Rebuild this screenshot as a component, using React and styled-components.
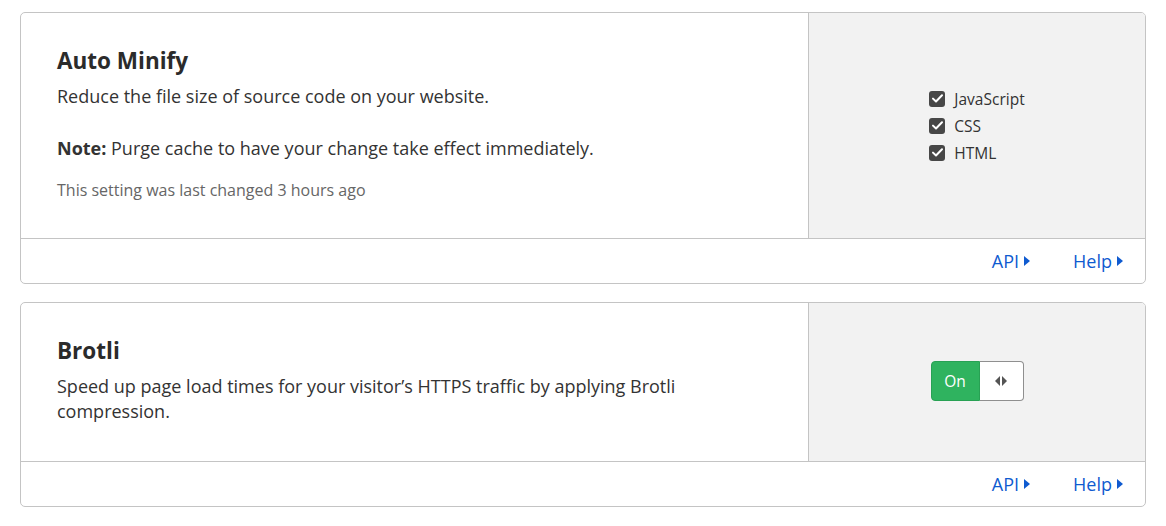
import React from 'react';
import styled, { createGlobalStyle } from 'styled-components';

const GlobalStyle = createGlobalStyle`
  body {
    margin: 0;
    background: #ffffff;
    font-family: "Open Sans", "Noto Sans", sans-serif;
    color: #333333;
  }
`

const Page = styled.div`
  display: flex;
  flex-direction: column;
  gap: 18px;
  padding: 12px 20px;
`

const Card = styled.section`
  border: 1px solid #c4c4c4;
  border-radius: 5px;
  background: #ffffff;
  overflow: hidden;
`

const CardBody = styled.div`
  display: grid;
  grid-template-columns: 1fr 337px;
`

const Info = styled.div`
  padding: 33px 36px 37px;
`

const Title = styled.h3`
  margin: 0 0 8px;
  font-size: 22.5px;
  line-height: 30px;
  font-weight: 700;
  color: #2b2b2b;
`

const Text = styled.p`
  margin: 0;
  font-size: 18px;
  line-height: 25px;
  color: #333333;

  & + & {
    margin-top: 27px;
  }
`

const Meta = styled.p`
  margin: 18px 0 0;
  font-size: 16px;
  line-height: 22px;
  color: #666666;
`

const Control = styled.div`
  display: flex;
  align-items: center;
  justify-content: center;
  border-left: 1px solid #c4c4c4;
  background: #f2f2f2;
`

const CheckList = styled.div`
  display: flex;
  flex-direction: column;
`

const CheckRow = styled.label`
  display: flex;
  align-items: center;
  gap: 9px;
  height: 27px;
  font-size: 15.5px;
  color: #333333;
`

const Box = styled.span`
  width: 16px;
  height: 16px;
  border-radius: 3px;
  background: #474747;
  display: flex;
  align-items: center;
  justify-content: center;
`

const Toggle = styled.div`
  display: flex;
  width: 93px;
  height: 40px;
  margin-top: -2px;
`

const ToggleOn = styled.span`
  flex: 0 0 47px;
  display: flex;
  align-items: center;
  justify-content: center;
  background: #2fb35f;
  border: 1px solid #28a154;
  border-radius: 4px 0 0 4px;
  color: #ffffff;
  font-size: 15.5px;
`

const ToggleKnob = styled.span`
  flex: 1;
  display: flex;
  align-items: center;
  justify-content: center;
  background: #ffffff;
  border: 1px solid #8f8f8f;
  border-left: none;
  border-radius: 0 4px 4px 0;
`

const Footer = styled.div`
  display: flex;
  justify-content: flex-end;
  align-items: center;
  gap: 43px;
  height: 44px;
  padding-right: 22px;
  border-top: 1px solid #c4c4c4;
`

const Link = styled.a`
  display: flex;
  align-items: center;
  gap: 5px;
  font-size: 18px;
  color: #0f5bd0;
  text-decoration: none;
  cursor: pointer;
`

function Caret() {
  return (
    <svg width="6" height="10" viewBox="0 0 6 10">
      <path d="M0 0 L6 5 L0 10 Z" fill="currentColor" />
    </svg>
  );
}

function Check() {
  return (
    <svg width="11" height="9" viewBox="0 0 11 9">
      <path d="M1 4.6 L4 7.5 L10 1.3" stroke="#ffffff" strokeWidth="2" fill="none" strokeLinecap="round" strokeLinejoin="round" />
    </svg>
  );
}

function Arrows() {
  return (
    <svg width="12" height="10" viewBox="0 0 12 10">
      <path d="M5 0 L0 5 L5 10 Z" fill="#555555" />
      <path d="M7 0 L12 5 L7 10 Z" fill="#555555" />
    </svg>
  );
}

function CardFooter() {
  return (
    <Footer>
      <Link>API <Caret /></Link>
      <Link>Help <Caret /></Link>
    </Footer>
  );
}

export default function App() {
  const formats = ['JavaScript', 'CSS', 'HTML'];

  return (
    <Page>
      <GlobalStyle />
      <Card>
        <CardBody>
          <Info>
            <Title>Auto Minify</Title>
            <Text>Reduce the file size of source code on your website.</Text>
            <Text><b>Note:</b> Purge cache to have your change take effect immediately.</Text>
            <Meta>This setting was last changed 3 hours ago</Meta>
          </Info>
          <Control>
            <CheckList>
              {formats.map((f) => (
                <CheckRow key={f}>
                  <Box><Check /></Box>
                  {f}
                </CheckRow>
              ))}
            </CheckList>
          </Control>
        </CardBody>
        <CardFooter />
      </Card>
      <Card>
        <CardBody>
          <Info>
            <Title>Brotli</Title>
            <Text>Speed up page load times for your visitor’s HTTPS traffic by applying Brotli compression.</Text>
          </Info>
          <Control>
            <Toggle>
              <ToggleOn>On</ToggleOn>
              <ToggleKnob><Arrows /></ToggleKnob>
            </Toggle>
          </Control>
        </CardBody>
        <CardFooter />
      </Card>
    </Page>
  );
}
